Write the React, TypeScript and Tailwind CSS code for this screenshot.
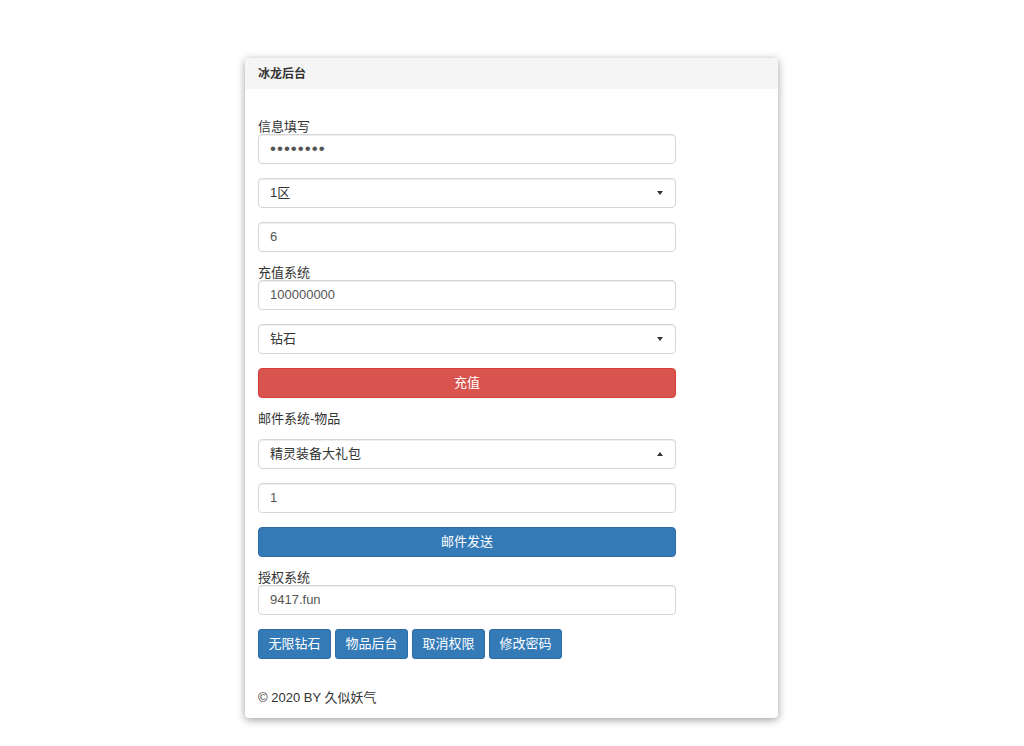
import React from 'react';

const font = { fontFamily: '"Liberation Sans", "Noto Sans CJK SC", sans-serif' };

function Field({ value, dots }: { value: string; dots?: boolean }) {
  return (
    <div
      className={`h-[30px] w-[418px] rounded-[4px] border border-[#d6d6d6] shadow-[inset_0_1px_1px_rgba(0,0,0,0.075)] bg-white pl-[11px] flex items-center text-[#555] ${
        dots ? 'text-[17px] tracking-[1px] text-[#555]' : 'text-[13px]'
      }`}
    >
      {value}
    </div>
  );
}

function Picker({ value, up }: { value: string; up?: boolean }) {
  return (
    <div className="h-[30px] w-[418px] rounded-[4px] border border-[#d6d6d6] shadow-[inset_0_1px_1px_rgba(0,0,0,0.075)] bg-white pl-[11px] pr-[12px] flex items-center justify-between text-[13px] text-[#333]">
      <span>{value}</span>
      {up ? (
        <span className="w-0 h-0 border-l-[3.5px] border-r-[3.5px] border-b-[4px] border-l-transparent border-r-transparent border-b-[#333]" />
      ) : (
        <span className="w-0 h-0 border-l-[3.5px] border-r-[3.5px] border-t-[4px] border-l-transparent border-r-transparent border-t-[#333]" />
      )}
    </div>
  );
}

function Label({ text, className = '' }: { text: string; className?: string }) {
  return <div className={`h-[14px] leading-[14px] text-[13px] text-[#333] ${className}`}>{text}</div>;
}

function SmallButton({ text }: { text: string }) {
  return (
    <button className="h-[30px] w-[73px] rounded-[3px] border border-[#2e6da4] bg-[#337ab7] text-white text-[13px] flex items-center justify-center">
      {text}
    </button>
  );
}

export default function App() {
  return (
    <div className="min-h-screen bg-white pt-[58px]" style={font}>
      <div className="ml-[245px] w-[533px] rounded-[4px] bg-white shadow-[0_2px_8px_rgba(0,0,0,0.38)] overflow-hidden">
        <div className="h-[31px] bg-[#f5f5f5] pl-[13px] flex items-center text-[12px] font-bold text-[#333]">
          冰龙后台
        </div>
        <div className="pl-[13px] pt-[31px] pb-[13px]">
          <Label text="信息填写" />
          <div className="mb-[14px]">
            <Field value="••••••••" dots />
          </div>
          <div className="mb-[14px]">
            <Picker value="1区" />
          </div>
          <div className="mb-[14px]">
            <Field value="6" />
          </div>

          <Label text="充值系统" />
          <div className="mb-[14px]">
            <Field value="100000000" />
          </div>
          <div className="mb-[14px]">
            <Picker value="钻石" />
          </div>
          <button className="mb-[14px] h-[30px] w-[418px] rounded-[4px] border border-[#d43f3a] bg-[#d9534f] text-white text-[13px] flex items-center justify-center">
            充值
          </button>

          <Label text="邮件系统-物品" className="mb-[13px]" />
          <div className="mb-[14px]">
            <Picker value="精灵装备大礼包" up />
          </div>
          <div className="mb-[14px]">
            <Field value="1" />
          </div>
          <button className="mb-[14px] h-[30px] w-[418px] rounded-[4px] border border-[#2e6da4] bg-[#337ab7] text-white text-[13px] flex items-center justify-center">
            邮件发送
          </button>

          <Label text="授权系统" />
          <div className="mb-[14px]">
            <Field value="9417.fun" />
          </div>
          <div className="flex gap-[4px]">
            <SmallButton text="无限钻石" />
            <SmallButton text="物品后台" />
            <SmallButton text="取消权限" />
            <SmallButton text="修改密码" />
          </div>

          <div className="mt-[32px] h-[14px] leading-[14px] text-[13px] text-[#333]">© 2020 BY 久似妖气</div>
        </div>
      </div>
    </div>
  );
}
